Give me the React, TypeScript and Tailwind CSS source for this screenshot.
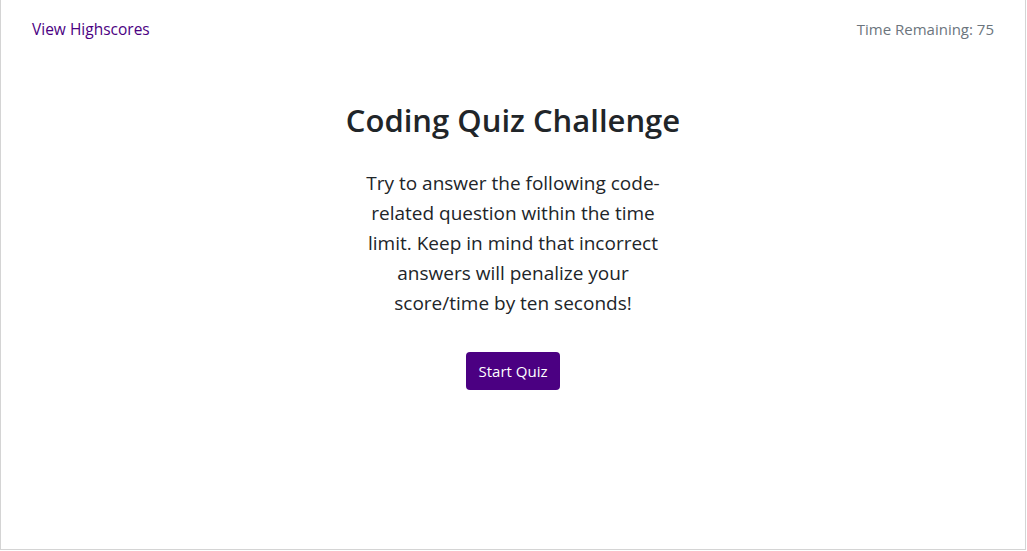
export default function App() {
  return (
    <div className="h-[551px] w-[1027px] bg-white font-['Open_Sans',sans-serif]">
      <div className="flex h-[550px] w-[1026px] flex-col border border-t-0 border-[#d4d4d4] bg-white">
        <header className="flex items-center justify-between px-[31px] pt-[18px]">
          <a href="#" className="text-[15.5px] text-[#4b0082]">
            View Highscores
          </a>
          <span className="text-[15px] text-[#6c757d]">Time Remaining: 75</span>
        </header>
        <main className="mt-[59px] flex flex-col items-center">
          <h1 className="text-[31px] font-semibold leading-[40px] text-[#212529]">
            Coding Quiz Challenge
          </h1>
          <p className="mt-[28px] w-[300px] text-center text-[19px] leading-[30px] text-[#212529]">
            Try to answer the following code-related question within the time limit. Keep in mind
            that incorrect answers will penalize your score/time by ten seconds!
          </p>
          <button className="mt-[34px] h-[38px] rounded-[4px] bg-[#4b0082] px-[13px] text-[15px] text-white">
            Start Quiz
          </button>
        </main>
      </div>
    </div>
  )
}
